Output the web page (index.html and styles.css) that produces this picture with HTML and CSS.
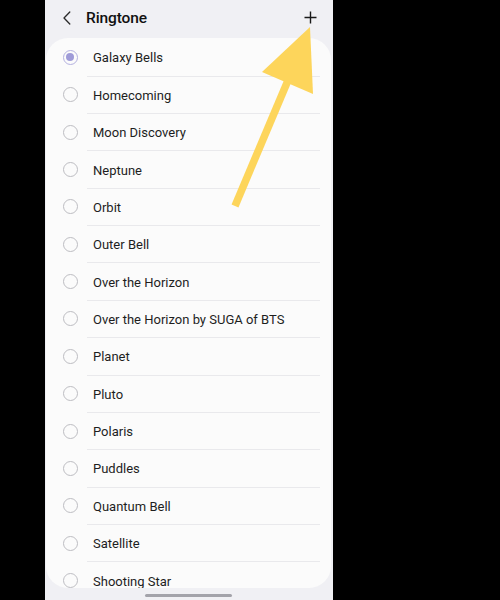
FILE: index.html
```html
<!DOCTYPE html>
<html lang="en">
<head>
<meta charset="utf-8">
<title>Ringtone</title>
<link rel="stylesheet" href="styles.css">
</head>
<body>
<div class="phone">
  <header class="topbar">
    <svg class="back" width="8" height="14" viewBox="0 0 8 14"><path d="M6.8 1 L1 7 L6.8 13" fill="none" stroke="#2a2a2a" stroke-width="1.3" stroke-linecap="round" stroke-linejoin="round"/></svg>
    <h1 class="title">Ringtone</h1>
    <svg class="plus" width="13" height="13" viewBox="0 0 13 13"><path d="M6.5 0.5 V12.5 M0.5 6.5 H12.5" fill="none" stroke="#1a1a1a" stroke-width="1.4"/></svg>
  </header>
  <ul class="card">
    <li class="row"><span class="radio checked"></span><span class="label">Galaxy Bells</span></li>
    <li class="row"><span class="radio"></span><span class="label">Homecoming</span></li>
    <li class="row"><span class="radio"></span><span class="label">Moon Discovery</span></li>
    <li class="row"><span class="radio"></span><span class="label">Neptune</span></li>
    <li class="row"><span class="radio"></span><span class="label">Orbit</span></li>
    <li class="row"><span class="radio"></span><span class="label">Outer Bell</span></li>
    <li class="row"><span class="radio"></span><span class="label">Over the Horizon</span></li>
    <li class="row"><span class="radio"></span><span class="label">Over the Horizon by SUGA of BTS</span></li>
    <li class="row"><span class="radio"></span><span class="label">Planet</span></li>
    <li class="row"><span class="radio"></span><span class="label">Pluto</span></li>
    <li class="row"><span class="radio"></span><span class="label">Polaris</span></li>
    <li class="row"><span class="radio"></span><span class="label">Puddles</span></li>
    <li class="row"><span class="radio"></span><span class="label">Quantum Bell</span></li>
    <li class="row"><span class="radio"></span><span class="label">Satellite</span></li>
    <li class="row"><span class="radio"></span><span class="label">Shooting Star</span></li>
  </ul>
  <div class="home-bar"></div>
</div>
<svg class="arrow" width="500" height="600" viewBox="0 0 500 600">
  <line x1="289" y1="78" x2="235" y2="206" stroke="#fdd55b" stroke-width="7.5"/>
  <polygon points="310,27 262,72 313,94" fill="#fdd55b"/>
</svg>
</body>
</html>
```
FILE: styles.css
```css
html, body {
  margin: 0;
  padding: 0;
  background: #000;
}
body {
  position: relative;
  width: 500px;
  height: 600px;
  overflow: hidden;
  font-family: Roboto, "Noto Sans", "Liberation Sans", sans-serif;
}
.phone {
  width: 288px;
  height: 600px;
  margin-left: 45px;
  background: #f0f0f4;
  display: flex;
  flex-direction: column;
  position: relative;
}
.topbar {
  height: 36px;
  flex: none;
  display: flex;
  align-items: center;
  padding: 0 16px 0 18px;
}
.back {
  display: block;
  flex: none;
}
.title {
  margin: 0 0 0 15px;
  font-size: 15.5px;
  font-weight: 500;
  color: #111;
  flex: 1;
  letter-spacing: -0.1px;
}
.plus {
  display: block;
  flex: none;
  margin-top: -2px;
}
.card {
  list-style: none;
  margin: 2px 2px 12px 1px;
  padding: 1.3px 0 0 0;
  background: #fbfbfb;
  border-radius: 22px;
  flex: 1;
  overflow: hidden;
}
.row {
  height: 37.36px;
  box-sizing: border-box;
  margin: 0 11px 0 41px;
  border-bottom: 1px solid #e9e9ec;
  display: flex;
  align-items: center;
}
.radio {
  width: 15px;
  height: 15px;
  box-sizing: border-box;
  border: 1.2px solid #bdbdc2;
  border-radius: 50%;
  margin-left: -24.5px;
  flex: none;
  display: flex;
  align-items: center;
  justify-content: center;
}
.radio.checked {
  border-color: #b3b0df;
}
.radio.checked::before {
  content: "";
  width: 8px;
  height: 8px;
  border-radius: 50%;
  background: #9f9bd8;
}
.label {
  margin-left: 15.5px;
  font-size: 13px;
  color: #1e1e1e;
  padding-top: 1px;
}
.home-bar {
  position: absolute;
  left: 100px;
  bottom: 3px;
  width: 87px;
  height: 3px;
  border-radius: 2px;
  background: #a3a3aa;
}
.arrow {
  position: absolute;
  left: 0;
  top: 0;
  pointer-events: none;
}
```
